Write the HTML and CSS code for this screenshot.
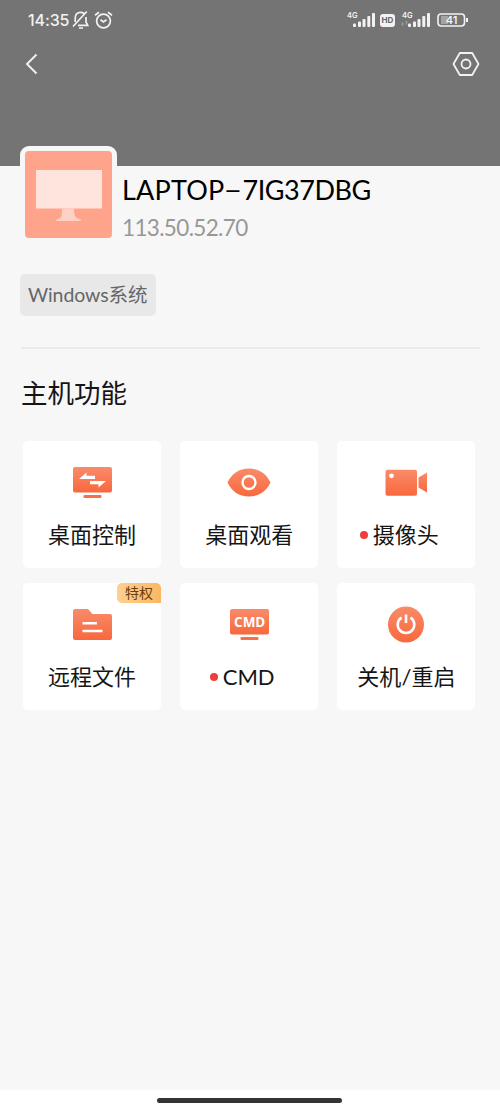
FILE: index.html
```html
<!DOCTYPE html>
<html lang="zh-CN">
<head>
<meta charset="utf-8">
<meta name="viewport" content="width=device-width, initial-scale=1">
<title>主机功能</title>
<link rel="stylesheet" href="styles.css">
</head>
<body>
<svg class="defs" width="0" height="0" aria-hidden="true">
  <defs>
    <linearGradient id="coral" x1="0" y1="0" x2="0" y2="1">
      <stop offset="0" stop-color="#fa8b69"/><stop offset="1" stop-color="#f8683e"/>
    </linearGradient>
  </defs>
</svg>
<div class="screen">
  <header class="hero">
    <div class="status">
      <div class="status-left">
        <span class="time">14:35</span>
        <svg class="bell" width="18" height="20" viewBox="0 0 18 20" fill="none" stroke="#f2f2f2" stroke-width="1.7">
          <path d="M3.2 12V8.2C3.2 4.6 5.2 2.3 8.5 2.3c1.4 0 2.6.4 3.500 1.200M14 7v5l1.700 3.300H6M1 16.500L14.800 1.500M7 18h4"/>
        </svg>
        <svg class="alarm" width="19" height="20" viewBox="0 0 19 20" fill="none" stroke="#f2f2f2" stroke-width="1.7">
          <circle cx="9.500" cy="11" r="6.900"/><path d="M6.500 9.800l3 2.200 3-2.200M1 5.200l4-3M18 5.200l-4-3"/>
        </svg>
      </div>
      <div class="status-right">
        <svg width="30" height="18" viewBox="0 0 30 18" fill="#f2f2f2">
          <text class="net" x="0" y="7">4G</text>
          <rect x="6" y="12.500" width="3" height="3.500" rx="1"/><rect x="11" y="10.500" width="3" height="5.500" rx="1"/><rect x="15.500" y="8" width="3" height="8" rx="1"/><rect x="20.300" y="5" width="3" height="11" rx="1"/><rect x="25" y="2" width="3" height="14" rx="1"/>
        </svg>
        <span class="hd">HD</span>
        <svg width="31" height="18" viewBox="0 0 31 18" fill="#f2f2f2">
          <text class="net" x="2" y="7">4G</text>
          <path d="M1 13h3M2.500 11v4M5 11h3M6.500 10v4" stroke="#a0a0a0" stroke-width=".8"/>
          <rect x="8" y="12.500" width="3" height="3.500" rx="1"/><rect x="13" y="10.500" width="3" height="5.500" rx="1"/><rect x="17.500" y="8" width="3" height="8" rx="1"/><rect x="22.300" y="5" width="3" height="11" rx="1"/><rect x="27" y="2" width="3" height="14" rx="1"/>
        </svg>
        <svg class="battery" width="32" height="14" viewBox="0 0 32 14">
          <rect x="1" y="1" width="26.500" height="12" rx="3.200" fill="none" stroke="#f2f2f2" stroke-width="1.600"/>
          <path d="M4 3h7v8H4z" fill="#a4a4a4"/><path d="M30 5v4" stroke="#f2f2f2" stroke-width="2"/>
          <text class="charge" x="14.500" y="11.200" text-anchor="middle" fill="#f2f2f2">41</text>
        </svg>
      </div>
    </div>
    <nav class="toolbar">
      <svg width="14" height="22" viewBox="0 0 14 22" fill="none" stroke="#f2f2f2" stroke-width="1.900"><path d="M11.500 1.500L2 11l9.500 9.500"/></svg>
      <svg width="28" height="26" viewBox="0 0 28 26" fill="none" stroke="#f2f2f2" stroke-width="1.800" stroke-linejoin="round"><path d="M7.800 2h12.400L26.500 13l-6.300 11H7.800L1.500 13z"/><circle cx="14" cy="13" r="4.500"/></svg>
    </nav>
  </header>

  <section class="host">
    <div class="avatar">
      <svg width="87" height="87" viewBox="0 0 87 87">
        <path d="M11 19h66v38.500H11z" fill="#ffe3dd"/><path d="M37 57.500h12q0 9.500 3 9.500l4 2v1H31v-1l4-2q2 0 2-9.500z" fill="#ffd1c4"/>
      </svg>
    </div>
    <div class="identity">
      <h1 class="name"><span class="brand">LAPTOP</span><span class="dash">–</span><span class="serial">7IG37DBG</span></h1>
      <p class="ip">113.50.52.70</p>
    </div>
  </section>
  <div class="tag"><span class="os">Windows</span>系统</div>

  <main class="features">
    <h2 class="heading">主机功能</h2>
    <div class="grid">
      <div class="card">
        <svg class="icon" viewBox="0 0 44 40">
          <rect x="3" y="4" width="39" height="25.500" rx="2" fill="url(#coral)"/><rect x="13.500" y="32" width="18" height="3" rx="1" fill="#f8704a"/>
          <path d="M9 16l7.500-6.500v3.200h8.500V16zM36 18l-7.500 6.500v-3.200H20V18z" fill="#fff"/>
        </svg>
        <div class="label">桌面控制</div>
      </div>
      <div class="card">
        <svg class="icon" viewBox="0 0 44 40">
          <path d="M.5 19.500C5 10.500 12 5.500 22 5.500s17 5 21.500 14C39 28.500 32 33.500 22 33.500S5 28.500.5 19.500z" fill="url(#coral)"/><circle cx="22" cy="19.500" r="6.500" fill="none" stroke="#fff" stroke-width="2.400"/>
        </svg>
        <div class="label">桌面观看</div>
      </div>
      <div class="card">
        <svg class="icon" viewBox="0 0 44 40">
          <rect x="1.500" y="6.800" width="31.500" height="26" rx="2" fill="url(#coral)"/><path d="M34.500 14.500l8.500-5v20l-8.500-5z" fill="url(#coral)"/><circle cx="7.500" cy="12.800" r="2.400" fill="#fff"/>
        </svg>
        <div class="label camera-label"><i class="dot"></i>摄像头</div>
      </div>
      <div class="card">
        <span class="badge">特权</span>
        <svg class="icon" viewBox="0 0 44 40">
          <path d="M5 4h13l4.500 5H40q2 0 2 2v22q0 2-2 2H5q-2 0-2-2V6q0-2 2-2z" fill="url(#coral)"/><path d="M12.500 18.200h14.500M12.500 26h20" stroke="#fff" stroke-width="2.500"/>
        </svg>
        <div class="label">远程文件</div>
      </div>
      <div class="card">
        <svg class="icon" viewBox="0 0 44 40">
          <rect x="3" y="4" width="39" height="25.500" rx="2" fill="url(#coral)"/><rect x="13.500" y="32" width="18" height="3" rx="1" fill="#f8704a"/>
          <text class="cmd" x="22.700" y="21.800" text-anchor="middle" fill="#fff">CMD</text>
        </svg>
        <div class="label cmd-label"><i class="dot"></i>CMD</div>
      </div>
      <div class="card">
        <svg class="icon" viewBox="0 0 44 40">
          <circle cx="22" cy="19.500" r="18" fill="url(#coral)"/><path d="M17.500 12.700a8.300 8.300 0 1 0 9 0M22 9.500v8.500" fill="none" stroke="#fff" stroke-width="2.600"/>
        </svg>
        <div class="label">关机<span class="slash">/</span>重启</div>
      </div>
    </div>
  </main>
  <footer class="gesture"><span class="pill"></span></footer>
</div>
</body>
</html>
```
FILE: styles.css
```css
* { box-sizing: border-box; }
body {
  margin: 0;
  background: #f7f7f7;
  font-family: Lato, "Noto Sans CJK SC", sans-serif;
  color: #151515;
}
h1, h2, p { margin: 0; font-weight: 400; }
svg { display: block; flex: none; }
.defs { position: absolute; }
.screen { display: flex; flex-direction: column; height: 1111px; }

.hero { height: 165.500px; background: #747474; flex: none; }
.status {
  display: flex;
  justify-content: space-between;
  height: 40px;
  padding: 0 31px 0 28px;
  color: #f2f2f2;
}
.status-left, .status-right { display: flex; align-items: center; }
.time { font: 500 16px/40px Inter, sans-serif; width: 44px; white-space: nowrap; letter-spacing: -.1px; }
.alarm { margin-left: 4px; }
.net { font: 600 7.500px Inter, sans-serif; }
.hd {
  width: 15px;
  height: 13px;
  margin: 0 5px 0 3px;
  border-radius: 3px;
  background: #f2f2f2;
  color: #666;
  font: 700 8px/13px Inter, sans-serif;
  text-align: center;
}
.battery { margin-left: 6px; }
.charge { font: 600 11px Inter, sans-serif; }
.toolbar {
  display: flex;
  align-items: center;
  justify-content: space-between;
  height: 48px;
  padding: 0 20px 0 25px;
}

.host { display: flex; height: 97px; margin-top: -20px; padding-left: 20px; flex: none; }
.avatar {
  width: 97px;
  height: 97px;
  border: 5px solid #f7f7f7;
  border-radius: 9px;
  background: #ffa48b;
  overflow: hidden;
}
.avatar svg { border-radius: 4px; }
.identity { padding: 26px 0 0 5px; }
.name { font-size: 27px; line-height: 36px; color: #000; white-space: nowrap; }
.brand { letter-spacing: .2px; }
.dash { display: inline-block; width: 18px; text-align: center; transform: translateY(-1px) scaleX(1.200); }
.serial { letter-spacing: -.45px; }
.ip { margin-top: 3px; font-size: 22.500px; line-height: 34px; letter-spacing: -.65px; color: #989898; }
.tag {
  flex: none;
  width: 136px;
  height: 42px;
  margin: 31.500px 0 0 20px;
  padding-left: 8px;
  border-radius: 5px;
  background: #e8e8e8;
  color: #666;
  font-size: 19.500px;
  line-height: 42px;
  white-space: nowrap;
}
.os { letter-spacing: -.1px; }
.features {
  flex: 1;
  margin: 31px 20px 0 21px;
  border-top: 2px solid #ebebeb;
}
.heading { height: 92px; padding-top: 24px; font-size: 26.500px; line-height: 40px; }
.grid {
  display: grid;
  grid-template-columns: repeat(3, 138px);
  grid-auto-rows: 127px;
  gap: 15.400px 19.200px;
  padding-left: 2px;
}
.card {
  position: relative;
  display: flex;
  flex-direction: column;
  align-items: center;
  padding-top: 22px;
  border-radius: 5px;
  background: #fff;
}
.icon { width: 44px; height: 40px; }
.label {
  display: flex;
  align-items: center;
  justify-content: center;
  margin-top: 15px;
  font-size: 22px;
  line-height: 34px;
  white-space: nowrap;
}
.dot { width: 8px; height: 8px; margin-right: 5px; border-radius: 50%; background: #f23c3c; }
.camera-label { padding-right: 14px; }
.cmd-label { padding-right: 14px; }
.slash { width: 10px; text-align: center; }
.cmd { font: 700 13.500px "Open Sans", sans-serif; }
.badge {
  position: absolute;
  top: 0;
  right: 0;
  width: 44px;
  height: 20px;
  border-radius: 5px 5px 0 5px;
  background: linear-gradient(90deg, #ffd091, #fab765);
  color: #6b3d0c;
  font-size: 14px;
  line-height: 20px;
  text-align: center;
}
.gesture { display: flex; justify-content: center; height: 21px; padding: 8px 1px 0 0; background: #fff; flex: none; }
.pill { width: 185px; height: 5px; border-radius: 3px; background: #343434; }
```
